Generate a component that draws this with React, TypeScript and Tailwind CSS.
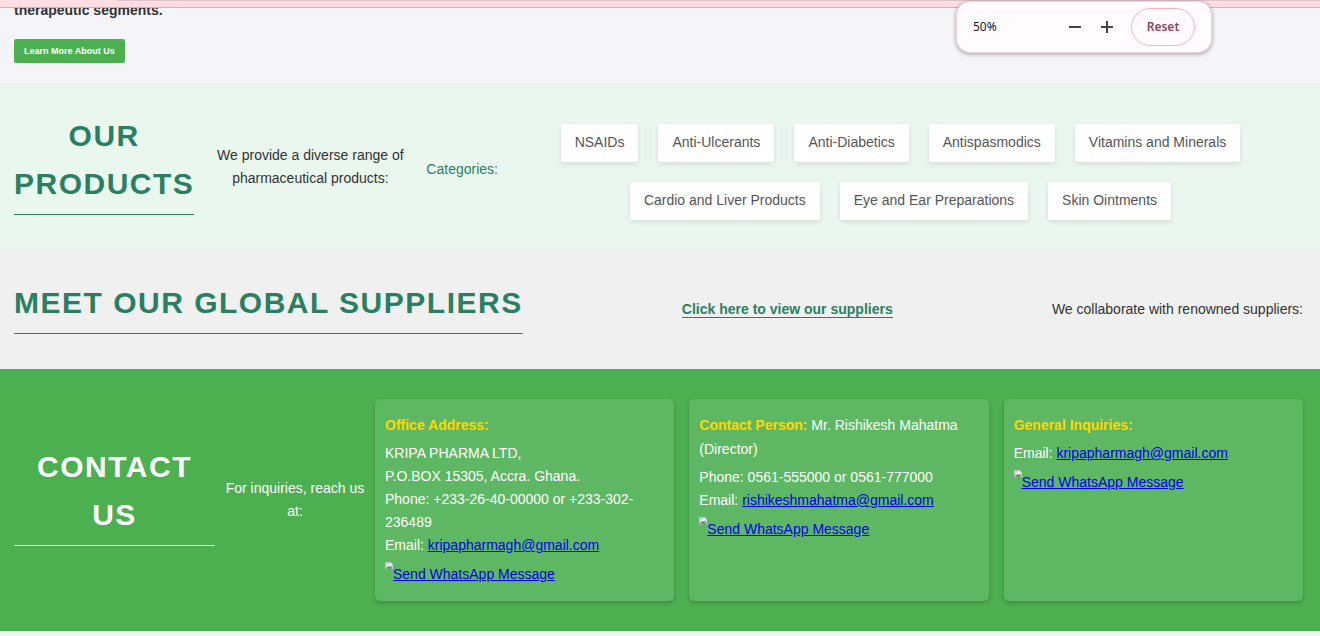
import type { ReactNode } from 'react';

const categories = [
  'NSAIDs',
  'Anti-Ulcerants',
  'Anti-Diabetics',
  'Antispasmodics',
  'Vitamins and Minerals',
  'Cardio and Liver Products',
  'Eye and Ear Preparations',
  'Skin Ointments',
];

function SectionHeading({ children, className }: { children: ReactNode; className: string }) {
  return (
    <h2
      className={`shrink-0 border-b pb-1.5 text-center text-[30px] leading-[48px] font-bold tracking-wider uppercase ${className}`}
    >
      {children}
    </h2>
  );
}

function MailLink({ address }: { address: string }) {
  return (
    <a href={`mailto:${address}`} className="text-[#0000ee] underline">
      {address}
    </a>
  );
}

function BrokenImage() {
  return (
    <svg viewBox="0 0 8 8" className="size-2 shrink-0" aria-hidden="true">
      <path d="M0 0H5L8 3V7H0Z" fill="#c3cdf0" />
      <path d="M0 0H5V1H1V7H0Z" fill="#c4c4c8" />
      <path d="M5 0L8 3H5Z" fill="#f4f4f4" />
      <path d="M2 3H3V2H5V4H2Z" fill="#ffffff" />
      <path d="M1 7V6L4 4L6 5L7 5V6L5 8H1Z" fill="#5aa257" />
      <path d="M0 7H4V8H0Z" fill="#a9a9ad" />
    </svg>
  );
}

function ContactCard({ title, detail, children }: { title: string; detail?: string; children: ReactNode }) {
  return (
    <article className="min-w-0 flex-1 rounded-[5px] bg-white/10 px-2.5 pt-3.5 pb-[15px] shadow-[0_2px_4px_rgba(0,0,0,0.2)]">
      <h3 className="leading-6">
        <strong className="text-[#ffd700]">{title}</strong>
        {detail && ` ${detail}`}
      </h3>
      <div className="my-[5px]">{children}</div>
      <a href="#whatsapp" className="flex items-start text-[#0000ee]">
        <BrokenImage />
        <span className="leading-6 underline">Send WhatsApp Message</span>
      </a>
    </article>
  );
}

function ZoomPopup() {
  return (
    <div className="absolute top-px right-[108px] flex h-[52px] w-64 items-center rounded-[14px] border border-[#f0d3da] bg-[#fffbff] px-4 font-['Noto_Sans',sans-serif] text-xs shadow-[0_1px_4px_rgba(0,0,0,0.35)]">
      <span className="flex-1 text-[#201a1b]">50%</span>
      <div className="flex items-center gap-5">
        <button type="button" aria-label="Zoom out">
          <svg viewBox="0 0 12 12" className="size-3" fill="#4a3f42">
            <path d="M0 5H12V7H0Z" />
          </svg>
        </button>
        <button type="button" aria-label="Zoom in">
          <svg viewBox="0 0 12 12" className="size-3" fill="#4a3f42">
            <path d="M0 5H5V0H7V5H12V7H7V12H5V7H0Z" />
          </svg>
        </button>
      </div>
      <button
        type="button"
        className="ml-[18px] h-[38px] w-16 rounded-full border border-[#ffb1c1] font-semibold text-[#8f4458]"
      >
        Reset
      </button>
    </div>
  );
}

export default function App() {
  return (
    <div className="relative min-h-screen bg-[#f4f4f9] font-['Liberation_Sans',Arial,sans-serif] text-sm leading-[23px] text-[#333]">
      <section className="px-3.5 pb-5">
        <p className="mb-[18px] leading-[21px] font-bold">therapeutic segments.</p>
        <a
          href="#about"
          className="inline-block rounded-[2px] bg-[#4caf50] px-2.5 align-top text-[9px] leading-6 font-bold text-white"
        >
          Learn More About Us
        </a>
      </section>

      <section className="flex items-center bg-[#e9f7ef] pt-[29px] pr-[17px] pb-[27px] pl-3.5">
        <SectionHeading className="mb-2 border-[#2a7f62] text-[#2a7f62]">
          Our
          <br />
          Products
        </SectionHeading>
        <p className="mx-2.5 mb-0.5 w-[212px] shrink-0 px-2 text-center">
          We provide a diverse range of pharmaceutical products:
        </p>
        <h3 className="mt-1 shrink-0 text-[#2a7f62]">Categories:</h3>
        <ul className="mt-2 flex flex-1 flex-wrap justify-center gap-5 px-11">
          {categories.map((name) => (
            <li
              key={name}
              className="rounded-[2px] bg-white px-3.5 pt-[7px] pb-2 text-[#555] shadow-[0_2px_5px_rgba(0,0,0,0.1)]"
            >
              {name}
            </li>
          ))}
        </ul>
      </section>

      <section className="flex items-center justify-between bg-[#f0f0f0] pt-[29px] pr-[17px] pb-[27px] pl-3.5">
        <SectionHeading className="mb-2 border-[#2a7f62] text-[#2a7f62]">Meet Our Global Suppliers</SectionHeading>
        <a href="#suppliers" className="mb-0.5 border-b border-[#2a7f62] leading-4 font-bold text-[#2a7f62]">
          Click here to view our suppliers
        </a>
        <p className="mb-0.5">We collaborate with renowned suppliers:</p>
      </section>

      <section className="flex items-center bg-[#4caf50] py-[30px] pr-[17px] pl-3.5 text-white">
        <SectionHeading className="mb-3 w-[201px] border-white">
          Contact
          <br />
          Us
        </SectionHeading>
        <p className="w-40 shrink-0 px-2 text-center">For inquiries, reach us at:</p>
        <div className="flex min-w-0 flex-1 gap-[15px]">
          <ContactCard title="Office Address:">
            <p>KRIPA PHARMA LTD,</p>
            <p>P.O.BOX 15305, Accra. Ghana.</p>
            <p>Phone: +233-26-40-00000 or +233-302-236489</p>
            <p>
              Email: <MailLink address="kripapharmagh@gmail.com" />
            </p>
          </ContactCard>
          <ContactCard title="Contact Person:" detail="Mr. Rishikesh Mahatma (Director)">
            <p>Phone: 0561-555000 or 0561-777000</p>
            <p>
              Email: <MailLink address="rishikeshmahatma@gmail.com" />
            </p>
          </ContactCard>
          <ContactCard title="General Inquiries:">
            <p>
              Email: <MailLink address="kripapharmagh@gmail.com" />
            </p>
          </ContactCard>
        </div>
      </section>

      <div className="absolute inset-x-0 top-0 h-2 border-b border-[#cfb3ba] bg-[#ffdde3]">
        <div className="ml-[117px] h-px bg-[#e3c3ca]" />
      </div>
      <ZoomPopup />
    </div>
  );
}
